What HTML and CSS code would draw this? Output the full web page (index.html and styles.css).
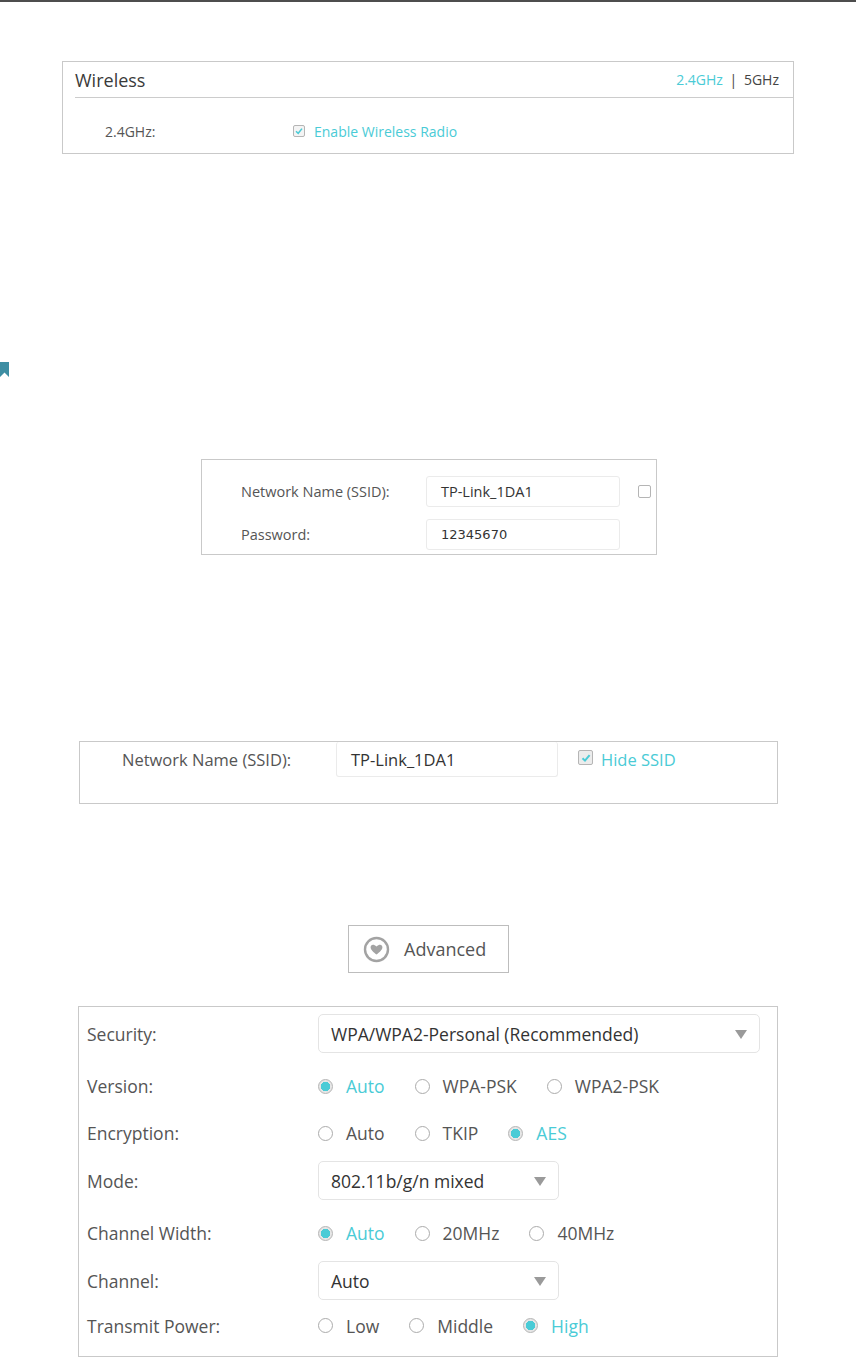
FILE: index.html
```html
<!DOCTYPE html>
<html>
<head>
	<title>Wireless Settings</title>
	<link rel="stylesheet" href="styles.css">
</head>
<body>
	<div class="rule"></div>

	<div class="shot shot-wireless">
		<div class="shot-head">
			<span class="shot-title">Wireless</span>
			<span class="bands"><span class="on">2.4GHz</span> <span class="sep">|</span> 5GHz</span>
		</div>
		<div class="radio-row">
			<span class="radio-label">2.4GHz:</span>
			<span class="check small checked"><svg width="8" height="8" viewBox="0 0 8 8"><path d="M1 4.2 L3.2 6.3 L7 1.6" fill="none" stroke="#4acbd6" stroke-width="1.5"/></svg></span>
			<span class="on">Enable Wireless Radio</span>
		</div>
	</div>

	<div class="bookmark">
		<svg width="9" height="15" viewBox="0 0 9 15"><path d="M0 0 H9 V15 L4.5 10.5 L0 15 Z" fill="#3e8ea3"/></svg>
	</div>

	<div class="shot shot-ssid">
		<div class="field">
			<span class="field-label">Network Name (SSID):</span>
			<span class="input">TP-Link_1DA1</span>
			<span class="check plain"></span>
		</div>
		<div class="field">
			<span class="field-label">Password:</span>
			<span class="input pass">12345670</span>
		</div>
	</div>

	<div class="shot shot-hide">
		<div class="field">
			<span class="field-label">Network Name (SSID):</span>
			<span class="input">TP-Link_1DA1</span>
			<span class="check checked"><svg width="10" height="10" viewBox="0 0 10 10"><path d="M1.5 5.2 L4 7.6 L8.6 2.2" fill="none" stroke="#4acbd6" stroke-width="2"/></svg></span>
			<span class="on">Hide SSID</span>
		</div>
	</div>

	<div class="advanced">
		<svg width="27" height="27" viewBox="0 0 27 27">
			<circle cx="13.5" cy="13.5" r="11.5" fill="none" stroke="#a3a3a3" stroke-width="2.4"/>
			<path d="M7.6 11.4 C7.6 8.6 10.6 7.8 13.5 10.6 C16.4 7.8 19.4 8.6 19.4 11.4 C19.4 13.4 16.4 16.2 13.5 18.6 C10.6 16.2 7.6 13.4 7.6 11.4 Z" fill="#a3a3a3"/>
		</svg>
		<span>Advanced</span>
	</div>

	<div class="shot shot-security">
		<div class="row tall">
			<span class="row-label">Security:</span>
			<span class="select wide">WPA/WPA2-Personal (Recommended)<i class="arrow"></i></span>
		</div>
		<div class="row">
			<span class="row-label">Version:</span>
			<span class="opt on"><i class="radio checked"></i>Auto</span>
			<span class="opt"><i class="radio"></i>WPA-PSK</span>
			<span class="opt"><i class="radio"></i>WPA2-PSK</span>
		</div>
		<div class="row">
			<span class="row-label">Encryption:</span>
			<span class="opt"><i class="radio"></i>Auto</span>
			<span class="opt"><i class="radio"></i>TKIP</span>
			<span class="opt on"><i class="radio checked"></i>AES</span>
		</div>
		<div class="row tall">
			<span class="row-label">Mode:</span>
			<span class="select">802.11b/g/n mixed<i class="arrow"></i></span>
		</div>
		<div class="row">
			<span class="row-label">Channel Width:</span>
			<span class="opt on"><i class="radio checked"></i>Auto</span>
			<span class="opt"><i class="radio"></i>20MHz</span>
			<span class="opt"><i class="radio"></i>40MHz</span>
		</div>
		<div class="row tall">
			<span class="row-label">Channel:</span>
			<span class="select">Auto<i class="arrow"></i></span>
		</div>
		<div class="row last">
			<span class="row-label">Transmit Power:</span>
			<span class="opt"><i class="radio"></i>Low</span>
			<span class="opt"><i class="radio"></i>Middle</span>
			<span class="opt on"><i class="radio checked"></i>High</span>
		</div>
	</div>
</body>
</html>
```

FILE: styles.css
```css
body {
	margin: 0;
	padding: 0;
	font-family: "Open Sans", Arial, sans-serif;
	color: #555555;
	background-color: #FFFFFF;
}

.rule {
	height: 2px;
	background-color: #4d4d4d;
}

.on {
	color: #4acbd6;
}

.shot {
	box-sizing: border-box;
	border: 1px solid #c9c9c9;
	background-color: #FFFFFF;
}

/* first picture: wireless radio */
.shot-wireless {
	margin: 59px 0 0 62px;
	width: 732px;
	height: 93px;
	font-size: 14px;
}

.shot-head {
	display: flex;
	justify-content: space-between;
	align-items: center;
	height: 35px;
	margin-left: 12px;
	border-bottom: 1px solid #cccccc;
}

.shot-title {
	font-size: 18px;
	color: #3a3a3a;
}

.bands {
	padding-right: 14px;
	color: #444444;
}

.bands .sep {
	margin: 0 3px;
}

.radio-row {
	display: flex;
	align-items: center;
	height: 40px;
	margin-top: 13px;
	padding-left: 42px;
}

.radio-label {
	width: 188px;
	flex-shrink: 0;
}

.check {
	box-sizing: border-box;
	display: inline-flex;
	flex-shrink: 0;
	align-items: center;
	justify-content: center;
	width: 15px;
	height: 15px;
	border: 1px solid #b5b5b5;
	border-radius: 2px;
	background-color: #ececec;
	margin-right: 9px;
}

.check.small {
	width: 12px;
	height: 12px;
	background-color: #f4f4f4;
}

.check.plain {
	width: 13px;
	height: 13px;
	background-color: #FFFFFF;
	margin: 0 0 0 18px;
}

.bookmark {
	margin-top: 208px;
	height: 15px;
	line-height: 0;
}

/* second picture: ssid and password */
.shot-ssid {
	margin: 82px 0 0 201px;
	width: 456px;
	height: 96px;
	padding-top: 16px;
	font-size: 14.5px;
}

.field {
	display: flex;
	align-items: center;
	padding-left: 39px;
	margin-bottom: 12px;
}

.field-label {
	width: 185px;
	flex-shrink: 0;
}

.input {
	box-sizing: border-box;
	display: flex;
	flex-shrink: 0;
	align-items: center;
	width: 194px;
	height: 31px;
	padding-left: 14px;
	border: 1px solid #ebebeb;
	border-radius: 3px;
	color: #333333;
}

.input.pass {
	font-family: "DejaVu Sans", Verdana, sans-serif;
	font-size: 13px;
}

/* third picture: hidden ssid */
.shot-hide {
	margin: 186px 0 0 79px;
	width: 699px;
	height: 63px;
	font-size: 16.5px;
}

.shot-hide .field {
	padding-left: 42px;
	margin: 0;
}

.shot-hide .field-label {
	width: 214px;
}

.shot-hide .input {
	width: 222px;
	height: 35px;
	border-top: none;
	margin-right: 20px;
}

.shot-hide .check {
	margin-right: 8px;
	margin-top: -4px;
}

/* advanced button */
.advanced {
	box-sizing: border-box;
	display: flex;
	align-items: center;
	margin: 121px 0 0 348px;
	width: 161px;
	height: 48px;
	padding-left: 14px;
	border: 1px solid #bdbdbd;
	font-size: 18px;
	color: #555555;
}

.advanced svg {
	margin-right: 14px;
}

/* fourth picture: security options */
.shot-security {
	margin: 33px 0 0 78px;
	width: 700px;
	height: 351px;
	padding-left: 8px;
	font-size: 17.5px;
}

.row {
	display: flex;
	align-items: center;
	height: 47px;
	padding-top: 5px;
	box-sizing: border-box;
}

.row.tall {
	height: 53px;
	padding-top: 0;
}

.row.last {
	padding-top: 0;
	margin-top: -5px;
}

.row-label {
	width: 231px;
	flex-shrink: 0;
}

.select {
	box-sizing: border-box;
	position: relative;
	display: flex;
	align-items: center;
	width: 241px;
	height: 39px;
	padding-left: 12px;
	border: 1px solid #e4e4e4;
	border-radius: 5px;
	color: #333333;
}

.select.wide {
	width: 442px;
}

.arrow {
	position: absolute;
	right: 12px;
	top: 15px;
	width: 0;
	height: 0;
	border-left: 6px solid transparent;
	border-right: 6px solid transparent;
	border-top: 9px solid #9a9a9a;
}

.opt {
	display: flex;
	align-items: center;
	margin-right: 30px;
	color: #555555;
}

.opt.on {
	color: #4acbd6;
}

.radio {
	box-sizing: border-box;
	display: inline-block;
	width: 15px;
	height: 15px;
	margin-right: 13px;
	border: 1px solid #ababab;
	border-radius: 50%;
	background-color: #FFFFFF;
}

.radio.checked {
	border: 1px solid #b5b5b5;
	background: radial-gradient(circle, #4acbd6 0, #4acbd6 4.5px, #e6e6e6 5px);
}
```
